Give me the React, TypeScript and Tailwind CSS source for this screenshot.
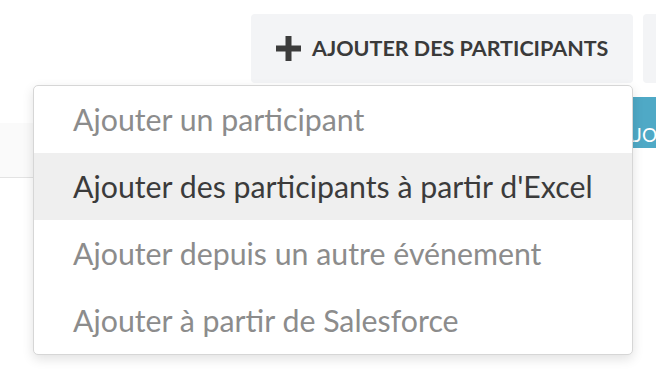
import React from "react";

const items = [
  { label: "Ajouter un participant", active: false },
  { label: "Ajouter des participants à partir d'Excel", active: true },
  { label: "Ajouter depuis un autre événement", active: false },
  { label: "Ajouter à partir de Salesforce", active: false },
];

export default function App() {
  return (
    <div
      className="relative w-[656px] h-[382px] overflow-hidden bg-white"
      style={{ fontFamily: "Lato, 'Open Sans', sans-serif" }}
    >
      <div className="flex pt-[14px]">
        <div className="w-[251px] shrink-0" />
        <button className="flex h-[69px] w-[382px] shrink-0 items-center rounded-[4px] bg-[#f3f4f6] pl-[25px] text-[#3a3a3a]">
          <svg width="25" height="25" viewBox="0 0 25 25" className="shrink-0">
            <rect x="9.5" y="0" width="6" height="25" fill="#3c3c3c" />
            <rect x="0" y="9.5" width="25" height="6" fill="#3c3c3c" />
          </svg>
          <span className="ml-[11px] text-[21.5px] font-bold whitespace-nowrap">
            AJOUTER DES PARTICIPANTS
          </span>
        </button>
        <div className="ml-[10px] h-[69px] w-[40px] shrink-0 rounded-[4px] bg-[#f3f4f6]" />
      </div>

      <div className="mt-[14px] flex items-start">
        <div className="mt-[26px] h-[55px] w-[600px] shrink-0 border-b border-[#e3e3e3] bg-[#fafafa]" />
        <div className="flex h-[51px] w-[56px] shrink-0 overflow-hidden bg-[#4fa9c6] pl-[21px] pt-[28px] text-[19px] leading-none text-white whitespace-nowrap">
          AJOUTER
        </div>
      </div>

      <div className="absolute left-[33px] top-[85px] w-[600px] overflow-hidden rounded-[5px] border border-[#d6d6d6] bg-white shadow-[0_4px_12px_rgba(0,0,0,0.12)]">
        {items.map((it) => (
          <div
            key={it.label}
            className={
              it.active
                ? "flex h-[67px] items-center bg-[#efefef] pl-[39px] text-[30.3px] text-[#3b3b3b] whitespace-nowrap"
                : "flex h-[67px] items-center pl-[39px] text-[30.3px] text-[#8c8c8c] whitespace-nowrap"
            }
          >
            {it.label}
          </div>
        ))}
      </div>
    </div>
  );
}
